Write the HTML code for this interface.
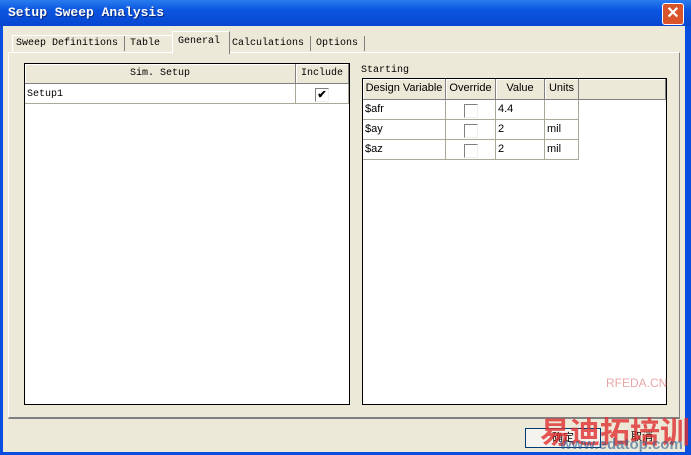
<!DOCTYPE html><html><head><style>
body{margin:0;width:691px;height:455px;overflow:hidden;background:#0a4ee0;font-family:"Liberation Mono",monospace;font-size:10px;position:relative}
.a{position:absolute}
.win{left:3px;top:26px;width:682px;height:426px;background:#ece9d8}
.sans{font-family:"Liberation Sans",sans-serif;font-size:11px}
.cell{position:absolute;box-sizing:border-box;border-right:1px solid #aca899;border-bottom:1px solid #aca899;padding:3px 2px;white-space:nowrap}
.hd{background:#ece9d8;border-right:1px solid #808080;border-bottom:1px solid #808080;box-shadow:inset 1px 1px #fff;text-align:center}
.cb{position:absolute;width:12px;height:12px;border-top:1px solid #808080;border-left:1px solid #808080;border-right:1px solid #f0efe8;border-bottom:1px solid #f0efe8;background:#fff}
</style></head><body>
<div class="a" style="left:0;top:0;width:691px;height:26px;background:linear-gradient(#2a7cf0,#0a55e0 40%,#0846d0)"></div>
<div class="a" style="left:8px;top:5px;color:#fff;font-weight:bold;font-size:13px;font-family:'Liberation Mono',monospace;text-shadow:1px 1px #0a2a80">Setup Sweep Analysis</div>
<div class="a" style="left:662px;top:3px;width:20px;height:20px;border:1px solid #fff;border-radius:3px;background:#d9542a;color:#fff;font:bold 16px 'Liberation Sans';text-align:center;line-height:20px">✕</div>
<div class="a win"></div>
<div class="a" style="left:8px;top:52px;width:672px;height:367px;border-top:1px solid #fff;border-left:1px solid #fff;border-right:1px solid #808080;border-bottom:2px solid #808080;box-sizing:border-box"></div>
<div class="a" style="left:12px;top:35px;width:160px;height:17px;border-top:1px solid #fff;border-left:1px solid #fff"></div>
<div class="a" style="left:16px;top:38px">Sweep Definitions</div>
<div class="a" style="left:124px;top:36px;height:15px;border-left:1px solid #808080"></div>
<div class="a" style="left:130px;top:38px">Table</div>
<div class="a" style="left:172px;top:31px;width:56px;height:22px;background:#ece9d8;border-top:1px solid #fff;border-left:1px solid #fff;border-right:1px solid #808080"></div>
<div class="a" style="left:178px;top:36px">General</div>
<div class="a" style="left:232px;top:38px">Calculations</div>
<div class="a" style="left:310px;top:36px;height:15px;border-left:1px solid #808080"></div>
<div class="a" style="left:316px;top:38px">Options</div>
<div class="a" style="left:364px;top:36px;height:15px;border-left:1px solid #808080"></div>
<div class="a" style="left:24px;top:63px;width:326px;height:342px;background:#fff;border:1px solid #000;box-sizing:border-box">
<div class="cell hd" style="left:0;top:0;width:271px;height:20px;padding-top:4px">Sim. Setup</div>
<div class="cell hd" style="left:271px;top:0;width:53px;height:20px;padding-top:4px">Include</div>
<div class="cell" style="left:0;top:20px;width:271px;height:20px;padding-top:5px">Setup1</div>
<div class="cell" style="left:271px;top:20px;width:53px;height:20px"></div>
<div class="cb" style="left:290px;top:24px;font:bold 11px 'Liberation Sans';line-height:12px;text-align:center">✔</div>
</div>
<div class="a" style="left:361px;top:65px">Starting</div>
<div class="a sans" style="left:362px;top:78px;width:305px;height:327px;background:#fff;border:1px solid #000;box-sizing:border-box">
<div class="cell hd" style="left:0;top:0;width:303px;height:21px"></div>
<div class="cell hd" style="left:0;top:0;width:83px;height:21px">Design Variable</div>
<div class="cell hd" style="left:83px;top:0;width:50px;height:21px">Override</div>
<div class="cell hd" style="left:133px;top:0;width:49px;height:21px">Value</div>
<div class="cell hd" style="left:182px;top:0;width:34px;height:21px">Units</div>
<div class="cell" style="left:0;top:21px;width:83px;height:20px">$afr</div><div class="cell" style="left:83px;top:21px;width:50px;height:20px"></div><div class="cell" style="left:133px;top:21px;width:49px;height:20px">4.4</div><div class="cell" style="left:182px;top:21px;width:34px;height:20px"></div>
<div class="cell" style="left:0;top:41px;width:83px;height:20px">$ay</div><div class="cell" style="left:83px;top:41px;width:50px;height:20px"></div><div class="cell" style="left:133px;top:41px;width:49px;height:20px">2</div><div class="cell" style="left:182px;top:41px;width:34px;height:20px">mil</div>
<div class="cell" style="left:0;top:61px;width:83px;height:20px">$az</div><div class="cell" style="left:83px;top:61px;width:50px;height:20px"></div><div class="cell" style="left:133px;top:61px;width:49px;height:20px">2</div><div class="cell" style="left:182px;top:61px;width:34px;height:20px">mil</div>
<div class="cb" style="left:101px;top:25px"></div><div class="cb" style="left:101px;top:45px"></div><div class="cb" style="left:101px;top:65px"></div>
</div>
<div class="a" style="left:525px;top:428px;width:76px;height:20px;border:1px solid #003c74;background:#f4f3ee;box-sizing:border-box;text-align:center;line-height:18px;font-family:'Liberation Sans','Noto Sans CJK SC',sans-serif;font-size:11px">确定</div>
<div class="a" style="left:606px;top:428px;width:72px;height:20px;box-sizing:border-box;text-align:center;line-height:18px;font-family:'Liberation Sans','Noto Sans CJK SC',sans-serif;font-size:11px">取消</div>
<div class="a" style="left:540px;top:408px;color:#e03030;font:bold 30px 'Noto Sans CJK SC',sans-serif;opacity:.8">易迪拓培训</div>
<div class="a" style="left:560px;top:436px;color:#2a5c90;font:bold 15px 'Liberation Sans',sans-serif;opacity:.6">www.edatop.com</div>
<div class="a" style="left:606px;top:376px;color:#e08080;font:12px 'Liberation Sans',sans-serif;opacity:.7">RFEDA.CN</div>
</body></html>
